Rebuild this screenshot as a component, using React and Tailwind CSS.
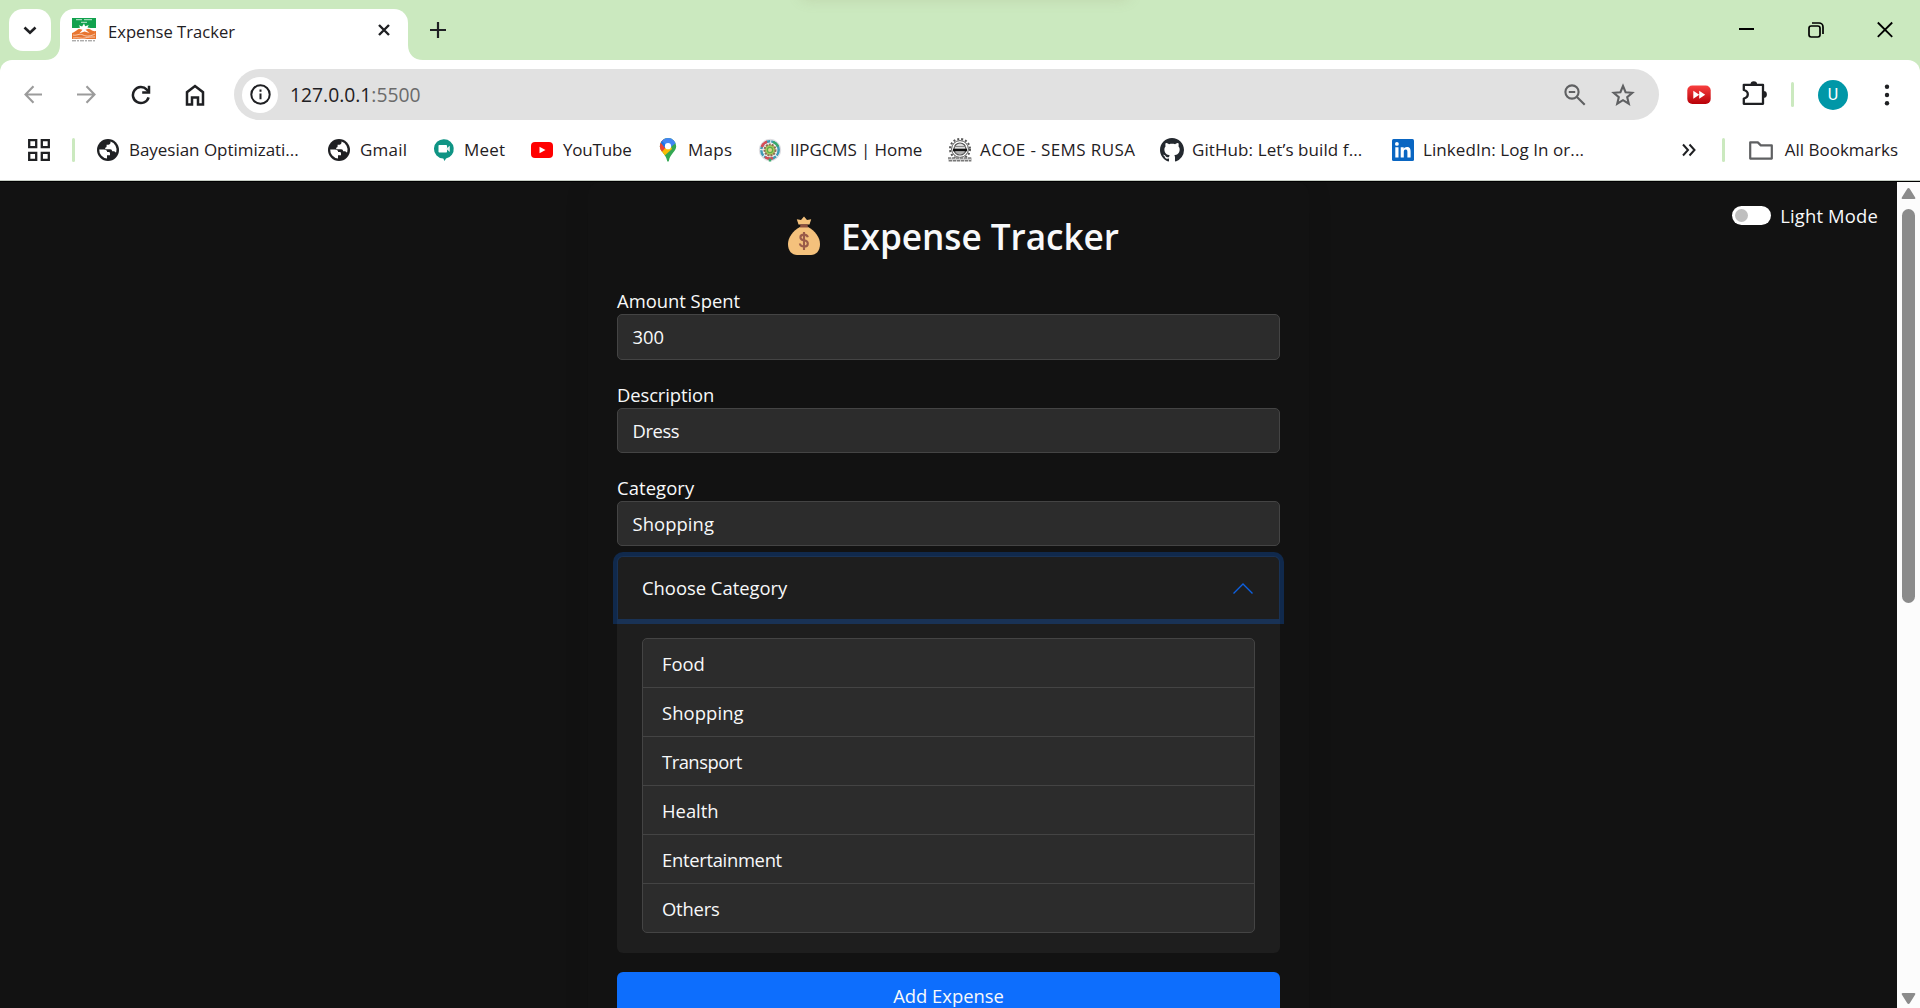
function TopStrip() {
  return (
    <div className="relative flex h-[60px] shrink-0 items-start overflow-hidden bg-[#cbe9bf]">
      <div className="absolute -top-4 left-[800px] h-4 w-[330px] rounded-full shadow-[0_0_14px_rgba(150,140,100,0.2)]" />
      <button className="mt-[9px] ml-[9px] flex h-[42px] w-[42px] items-center justify-center rounded-[14px] bg-white">
        <svg width="14" height="9" viewBox="0 0 14 9" fill="none" stroke="#1f2023" strokeWidth="2.6">
          <path d="M1.5 1.5 7 6.8l5.5-5.3" />
        </svg>
      </button>
      <svg className="mt-[45px] -ml-[6px] shrink-0" width="15" height="15" viewBox="0 0 15 15" fill="#fff">
        <path d="M15 0v15H0C9 15 15 9 15 0z" />
      </svg>
      <div className="mt-[9px] flex h-[51px] w-[348px] items-center rounded-t-[14px] bg-white pb-[9px] pl-3">
        <svg width="24" height="24" viewBox="0 0 24 24">
          <path fill="#12a24e" d="M0 0h24v10H0z" />
          <path fill="#e8752f" d="M0 15c4-1 5-5 12-5s8 4 12 3v8H0z" />
          <path fill="#fff" opacity=".6" d="M4 1h6v1.300H4zM12 1h8v1.300h-8zM9 3.800h6v1.300H9z" />
          <path fill="#fff" d="m12 5.500 1.200 2.800 3.500-1.300-1.200 2.600 3 .5-5 1.600 4 3.200-5-1.500-5 1.800 3-3.500-5.500-1.400 3.200-.7-1.400-2.400 3.300 1.200z" />
          <path stroke="#fff" strokeWidth=".6" fill="none" d="M1 17c4 1 6-2 10 0s8 1 12-1M1 20c5-1 9 1 12 0s6-1 10-1" />
          <path stroke="#8a8a8a" strokeWidth="1" strokeDasharray="4 1 2 1" d="M0 22.800h24" />
        </svg>
        <span className="mt-[3px] ml-3 w-[246px] text-[16.6px] leading-6 text-[#1f2023]">Expense Tracker</span>
        <svg className="mb-px ml-[24px] shrink-0" width="12" height="12" viewBox="0 0 12 12" stroke="#1f2023" strokeWidth="2.4">
          <path d="m1 1 10 10M11 1 1 11" />
        </svg>
      </div>
      <svg className="mt-[45px]" width="15" height="15" viewBox="0 0 15 15" fill="#fff">
        <path d="M0 0v15h15C6 15 0 9 0 0z" />
      </svg>
      <svg className="mt-[22px] ml-[7px]" width="16" height="16" viewBox="0 0 16 16" stroke="#1f2023" strokeWidth="2.2">
        <path d="M8 0v16M0 8h16" />
      </svg>
      <div className="mt-[21px] mr-[27px] ml-auto flex gap-[53px] text-black">
        <svg width="16" height="17" viewBox="0 0 16 17" stroke="currentColor" strokeWidth="2">
          <path d="M0 8h15" />
        </svg>
        <svg width="16" height="17" viewBox="0 0 16 17" fill="none" stroke="currentColor" strokeWidth="1.7">
          <rect x="1" y="5" width="11" height="11" rx="2.2" />
          <path d="M4 2h7a4 4 0 0 1 4 4v7" />
        </svg>
        <svg width="16" height="17" viewBox="0 0 16 17" stroke="currentColor" strokeWidth="1.8">
          <path d="m.8 1.5 14.4 14.4M15.2 1.5.8 15.9" />
        </svg>
      </div>
    </div>
  );
}

function Toolbar() {
  return (
    <div className="bg-[#cbe9bf]">
      <div className="flex h-[60px] items-start rounded-t-[12px] bg-white pt-[9px]">
        <div className="flex h-[51px] w-full items-center">
          <svg className="ml-6 shrink-0" width="19" height="19" viewBox="0 0 19 19" fill="none" stroke="#9b9b9b" strokeWidth="2.1">
            <path d="M18 9.5H2M9.5 1.2 1.5 9.5l8 8.3" />
          </svg>
          <svg className="ml-[34px] shrink-0" width="19" height="19" viewBox="0 0 19 19" fill="none" stroke="#9b9b9b" strokeWidth="2.1">
            <path d="M0 9.5h16.5M9.5 1.2l8 8.3-8 8.3" />
          </svg>
          <svg className="ml-[35px] shrink-0" width="20" height="20" viewBox="0 0 20 20" fill="none" stroke="#1f2023" strokeWidth="2.5">
            <path d="M17.6 12.3A8 8 0 1 1 15.8 4.6L18 6.8" />
            <path d="M18 .8v6.7h-6.8" />
          </svg>
          <svg className="ml-[34px] shrink-0" width="20" height="22" viewBox="0 0 20 22" fill="none" stroke="#1f2023" strokeWidth="2.5">
            <path d="M2 20.5V8.2L10 2l8 6.2v12.3h-5v-7H7v7z" />
          </svg>
          <div className="ml-[29px] flex h-[51px] w-[1425px] shrink-0 items-center rounded-full bg-[#e1e1e1] pl-[8px]">
            <div className="flex h-[36px] w-[36px] items-center justify-center rounded-full bg-white">
              <svg width="21" height="21" viewBox="0 0 21 21" fill="none" stroke="#1f2023" strokeWidth="2">
                <circle cx="10.5" cy="10.5" r="9.2" />
                <path d="M10.5 9.5v5.8M10.5 5.6v2.2" />
              </svg>
            </div>
            <span className="ml-[12px] text-[19.3px] leading-7 text-[#1f2023]">
              127.0.0.1<span className="text-[#6b6b6b]">:5500</span>
            </span>
            <svg className="ml-auto" width="22" height="22" viewBox="0 0 22 22" fill="none" stroke="#5f6062" strokeWidth="2.1">
              <circle cx="8" cy="8" r="6.6" />
              <path d="m12.7 12.7 8 8M4.8 8h6.4" />
            </svg>
            <svg className="mr-[24px] ml-[25px]" width="24" height="24" viewBox="0 0 24 24" fill="none" stroke="#5f6062" strokeWidth="2.100">
              <path d="m12 3 2.600 6.200 6.700.6-5.100 4.400 1.600 6.500-5.800-3.500-5.800 3.500 1.600-6.500-5.100-4.400 6.700-.6z" />
            </svg>
          </div>
          <svg className="ml-7 shrink-0" width="24" height="20" viewBox="0 0 24 20">
            <defs>
              <linearGradient id="ext" x1="0" y1="0" x2="0" y2="1">
                <stop offset="0" stopColor="#f8403f" />
                <stop offset="1" stopColor="#b80008" />
              </linearGradient>
            </defs>
            <rect x=".3" y=".5" width="23.4" height="18.5" rx="5" fill="url(#ext)" />
            <path fill="#fff" d="m6.3 5.8 6 4-6 4zM12.2 5.8l6 4-6 4z" />
          </svg>
          <svg className="mb-[3px] ml-[31px] shrink-0" width="26" height="26" viewBox="0 0 26 26">
            <path fill="none" stroke="#1f2023" strokeWidth="2.3" strokeLinejoin="round" d="M1.8 4.8h19.2v19H1.8v-5.2q4-1 4-4.3t-4-4.3z" />
            <path fill="#1f2023" d="M8.5 4.5a3.3 3.3 0 0 1 6.6 0zM21.5 11a3.3 3.3 0 0 1 0 6.8z" />
          </svg>
          <div className="ml-[23px] h-[25px] w-[3px] shrink-0 rounded-full bg-[#cbe9bf]" />
          <div className="ml-6 flex h-[30px] w-[30px] shrink-0 items-center justify-center rounded-full bg-[#0097a7] font-['Roboto',sans-serif] text-[16px] text-white">
            U
          </div>
          <svg className="ml-[36px] shrink-0" width="6" height="22" viewBox="0 0 6 22" fill="#1f2023">
            <circle cx="3" cy="2.7" r="2.2" />
            <circle cx="3" cy="11" r="2.2" />
            <circle cx="3" cy="19.3" r="2.2" />
          </svg>
        </div>
      </div>
    </div>
  );
}

function GlobeIcon() {
  return (
    <svg width="24" height="24" viewBox="0 0 24 24">
      <circle cx="12" cy="12" r="11" fill="#1f2023" />
      <path fill="#fff" d="M3.2 11.5H8q3 0 3.2 2.6h1.6q1.2 0 1.2 1.2v1.9h-3v3.4A8.8 8.8 0 0 1 3.2 11.500z" />
      <path fill="#fff" d="M14.500 3.600v1.200q0 1.700-1.900 1.900h-2v1.800q0 1-1.400 1.200v1.600h5q1.900.1 2 2h1.800q1 .1 1 1h1.200a8.700 8.700 0 0 0-5.700-10.700z" />
    </svg>
  );
}

function MeetIcon() {
  return (
    <svg width="24" height="24" viewBox="0 0 24 24">
      <path fill="#0f9484" d="M12 1.200a9.700 9.700 0 0 1 2 19.200L12.500 23l-1.200-2.400A9.700 9.700 0 0 1 12 1.200z" />
      <rect x="6.500" y="7" width="8.500" height="7.500" rx=".8" fill="#fff" />
      <path fill="#e6efee" d="m14 10.700 3.800-3v6.200z" />
    </svg>
  );
}

function YouTubeIcon() {
  return (
    <svg width="24" height="24" viewBox="0 0 24 24">
      <rect x="1" y="4" width="22" height="16" rx="4" fill="#f00" />
      <path fill="#fff" d="m9.500 8.800 6 3.200-6 3.200z" />
    </svg>
  );
}

function MapsIcon() {
  return (
    <svg width="24" height="24" viewBox="0 0 24 24">
      <clipPath id="pin">
        <path d="M12 0a8.200 8.200 0 0 1 8.200 8.200c0 5.200-6 7.300-7.300 14.600q-.9 2-1.800 0C9.800 15.500 3.800 13.400 3.800 8.200A8.200 8.200 0 0 1 12 0z" />
      </clipPath>
      <g clipPath="url(#pin)">
        <path fill="#34a853" d="M0 0h24v24H0z" />
        <path fill="#fbbc04" d="M0 14 12 2l4 9-9 8z" />
        <path fill="#ea4335" d="M0 0h7l5 7-8 9-4-4z" />
        <path fill="#4285f4" d="M5 2 12-1h8v6l-8 6z" />
        <path fill="#1a73e8" d="m5 2 7 7-3 1-4-5z" />
      </g>
      <circle cx="12" cy="8.200" r="3.100" fill="#fff" />
    </svg>
  );
}

function CmsIcon() {
  return (
    <svg width="24" height="24" viewBox="0 0 24 24" fill="none">
      <circle cx="12" cy="12" r="10.700" fill="#f3f1f3" stroke="#dddce0" />
      <circle cx="12" cy="12" r="8.700" stroke="#3f9bb5" strokeWidth="2.500" strokeDasharray="6 1" />
      <path d="M3.800 9A8.700 8.700 0 0 1 9 3.600M15 20a8.700 8.700 0 0 1-8-1" stroke="#d84a54" strokeWidth="2.500" />
      <path d="M15 3.800A8.700 8.700 0 0 1 20 8.500M12 20.500v3" stroke="#39a86b" strokeWidth="2.500" />
      <circle cx="12" cy="12" r="5.500" fill="#a5c95d" stroke="#8f6d54" strokeWidth="2" strokeDasharray="2 1" />
      <circle cx="12" cy="12" r="2.600" fill="#d9d58c" stroke="#5dac48" strokeWidth="1.200" />
    </svg>
  );
}

function GearIcon() {
  return (
    <svg width="24" height="24" viewBox="0 0 24 24" fill="none" stroke="#555">
      <circle cx="12" cy="11" r="10" strokeWidth="2" strokeDasharray="2 2" />
      <circle cx="12" cy="11" r="8.400" strokeWidth="1" />
      <circle cx="12" cy="11" r="6" fill="#ddd" strokeWidth="1.200" />
      <path d="M6 8.500h12M7 15h10" stroke="#888" />
      <path d="M5 12h14" stroke="#111" strokeWidth="2.600" />
      <path d="M0 19.500h24v4H0z" fill="#ccc" stroke="none" />
      <path d="M0 20h24M1 22.800h22" stroke="#555" strokeDasharray="3 1" />
    </svg>
  );
}

function GitHubIcon() {
  return (
    <svg width="24" height="24" viewBox="0 0 16 16" fill="#24292f">
      <path d="M8 0C3.580 0 0 3.580 0 8c0 3.540 2.290 6.530 5.470 7.590.4.070.55-.17.55-.38 0-.19-.01-.82-.01-1.490-2.010.37-2.530-.49-2.690-.94-.09-.23-.48-.94-.82-1.130-.28-.15-.68-.52-.01-.53.63-.01 1.080.58 1.230.82.72 1.210 1.870.87 2.330.66.07-.52.28-.87.51-1.070-1.780-.2-3.640-.89-3.640-3.950 0-.87.31-1.590.82-2.150-.08-.2-.36-1.020.08-2.120 0 0 .67-.21 2.200.82.64-.18 1.320-.27 2-.27s1.360.09 2 .27c1.530-1.040 2.200-.82 2.200-.82.44 1.100.16 1.920.08 2.120.51.56.82 1.270.82 2.150 0 3.070-1.870 3.750-3.650 3.950.29.25.54.73.54 1.480 0 1.070-.01 1.930-.01 2.200 0 .21.15.46.55.38A8.010 8.010 0 0 0 16 8c0-4.420-3.580-8-8-8z" />
    </svg>
  );
}

function LinkedInIcon() {
  return (
    <svg width="24" height="24" viewBox="0 0 24 24">
      <rect x="1" y="1" width="22" height="22" rx="1.500" fill="#0a66c2" />
      <path fill="#fff" d="M4.300 9.300h3.200v10.300H4.300zM9.700 9.300h3v1.400c.5-.9 1.600-1.700 3.200-1.700 3 0 3.700 2 3.700 4.700v5.900h-3.200v-5.200c0-1.300 0-2.800-1.700-2.800s-1.900 1.300-1.900 2.700v5.300H9.700z" />
      <circle cx="5.900" cy="5.900" r="1.900" fill="#fff" />
    </svg>
  );
}

const bookmarks = [
  { label: "Bayesian Optimizati...", Icon: GlobeIcon, box: "w-[231px]", text: "ml-[9px] tracking-[-0.03px]" },
  { label: "Gmail", Icon: GlobeIcon, box: "w-[105px]", text: "ml-[9px] tracking-[0.2px]" },
  { label: "Meet", Icon: MeetIcon, box: "w-[98px]", text: "ml-[8px] tracking-[0.2px]" },
  { label: "YouTube", Icon: YouTubeIcon, box: "w-[126px]", text: "ml-[9px] tracking-[-0.2px]" },
  { label: "Maps", Icon: MapsIcon, box: "w-[102px]", text: "ml-[8px] tracking-[0.3px]" },
  { label: "IIPGCMS | Home", Icon: CmsIcon, box: "w-[190px]", text: "ml-[8px] tracking-[-0.1px]" },
  { label: "ACOE - SEMS RUSA", Icon: GearIcon, box: "w-[212px]", text: "ml-[8px] tracking-[0.38px]" },
  { label: "GitHub: Let’s build f...", Icon: GitHubIcon, box: "w-[231px]", text: "ml-[8px] tracking-[0.09px]" },
  { label: "LinkedIn: Log In or...", Icon: LinkedInIcon, box: "w-[200px]", text: "ml-[8px] tracking-[0.07px]" },
];

function BookmarksBar() {
  return (
    <div className="flex h-[61px] shrink-0 items-center border-b border-[#c6cdc4] bg-white text-[17px] leading-6 text-[#1f2023]">
      <svg className="ml-7 shrink-0" width="22" height="22" viewBox="0 0 22 22" fill="none" stroke="#1f2023" strokeWidth="2.3">
        <path d="M1.200 1.200h7v7h-7zM13.800 1.200h7v7h-7zM1.200 13.800h7v7h-7zM13.800 13.800h7v7h-7z" />
      </svg>
      <div className="mr-[21px] ml-[22px] h-[24px] w-[3px] shrink-0 rounded-full bg-[#cbe9bf]" />
      {bookmarks.map(({ label, Icon, box, text }) => (
        <div key={label} className={`flex shrink-0 items-center whitespace-nowrap ${box}`}>
          <Icon />
          <span className={text}>{label}</span>
        </div>
      ))}
      <svg className="ml-auto shrink-0" width="14" height="14" viewBox="0 0 14 14" fill="none" stroke="#1f2023" strokeWidth="2">
        <path d="m1 1.500 5 5.500-5 5.500M7.500 1.500l5 5.500-5 5.500" />
      </svg>
      <div className="ml-[26px] h-[24px] w-[3px] shrink-0 rounded-full bg-[#cbe9bf]" />
      <svg className="ml-6 shrink-0" width="24" height="19" viewBox="0 0 24 19" fill="none" stroke="#5f6062" strokeWidth="2.200" strokeLinejoin="round">
        <path d="M1.200 1.400h7.600l3 3h11v13.200H1.200z" />
      </svg>
      <span className="mr-[22px] ml-3 whitespace-nowrap">All Bookmarks</span>
    </div>
  );
}

function MoneyBag() {
  return (
    <svg width="34" height="40" viewBox="0 0 34 40">
      <path fill="#f4c17c" d="M11.500 8.500 9.800 3.200l4.200.8 3-3.500 3 3.500 4.200-.8-1.700 5.300z" />
      <path fill="#f4c17c" d="M13 11h8c7 3.500 12 10.500 12 17 0 7-4 11-9 11H10c-5 0-9-4-9-11 0-6.500 5-13.500 12-17z" />
      <path fill="#8d5142" d="M13.500 8.300h7l.5 3.300h-8z" />
      <path fill="none" stroke="#9a5b49" strokeWidth="2.100" d="M20.800 21.300c-.3-1.600-1.700-2.700-3.800-2.700-4.800 0-4.800 5 0 5.700 5.200.7 5 6.200 0 6.200-2.400 0-3.900-1.200-4.100-3M17 16v18" />
    </svg>
  );
}

function Field({ label, value, labelClass = "", valueClass = "", height }) {
  return (
    <div className="mb-6">
      <div className={`h-6 leading-[22px] ${labelClass}`}>{label}</div>
      <div className={`flex items-center rounded-[5px] border border-[#444] bg-[#2c2c2c] pl-[14.500px] ${height}`}>
        <span className={valueClass}>{value}</span>
      </div>
    </div>
  );
}

const categories = [
  { name: "Food", text: "" },
  { name: "Shopping", text: "tracking-[0.1px]" },
  { name: "Transport", text: "tracking-[-0.5px]" },
  { name: "Health", text: "" },
  { name: "Entertainment", text: "tracking-[-0.3px]" },
  { name: "Others", text: "tracking-[-0.2px]" },
];

function ExpenseForm() {
  return (
    <div className="ml-[588px] h-[1000px] w-[721px] shrink-0 rounded-[12px] bg-[#121212] px-[29px] shadow-[0_0_24px_rgba(0,0,0,0.12)]">
      <h1 className="flex h-[108px] items-center pl-[170px]">
        <MoneyBag />
        <span className="ml-[19px] text-[35.200px] font-semibold whitespace-nowrap tracking-[-0.05px] pl-px">Expense Tracker</span>
      </h1>
      <Field label="Amount Spent" value="300" height="h-[46px]" />
      <Field label="Description" value="Dress" height="h-[45px]" labelClass="tracking-[-0.1px]" valueClass="tracking-[-0.4px]" />
      <Field label="Category" value="Shopping" height="h-[45px]" labelClass="tracking-[0.1px]" valueClass="tracking-[0.08px]" />
      <div className="-mt-[14px] h-[397px] rounded-[6px] bg-[#1e1e1e] px-px pt-px">
        <div className="flex h-[62px] items-center justify-between rounded-t-[5px] pr-[26px] pl-6 shadow-[0_0_0_5px_rgba(13,110,253,0.25)]">
          <span>Choose Category</span>
          <svg width="20" height="11" viewBox="0 0 20 11" fill="none" stroke="#0d60e0" strokeWidth="1.400">
            <path d="M.5 10.500 10 1l9.500 9.500" />
          </svg>
        </div>
        <div className="mx-6 mt-[19px] rounded-[5px] border border-[#444] bg-[#2c2c2c]">
          {categories.map(({ name, text }) => (
            <div key={name} className="flex h-[49px] items-center border-b border-[#444] pt-px pl-[19px] last:h-[48px] last:border-b-0">
              <span className={text}>{name}</span>
            </div>
          ))}
        </div>
      </div>
      <button className="mt-[19px] flex h-[47px] w-full items-center justify-center rounded-[6px] bg-[#0d6efd]">
        Add Expense
      </button>
    </div>
  );
}

function Scrollbar() {
  return (
    <div className="flex w-[23px] shrink-0 flex-col items-center bg-[#fcfcfc]">
      <svg className="mt-[6px]" width="15" height="12" viewBox="0 0 15 12" fill="#8b8b8b">
        <path d="M7.500 0q.8 0 1.400 1l5.300 8.500q.7 1.500-.9 1.500H1.700Q.1 11 .8 9.500L6.100 1q.6-1 1.400-1z" />
      </svg>
      <div className="mt-[9px] h-[394px] w-[13px] rounded-full bg-[#8b8b8b]" />
      <svg className="mt-auto mb-[4px]" width="15" height="12" viewBox="0 0 15 12" fill="#8b8b8b">
        <path d="M7.500 12q.8 0 1.400-1l5.300-8.500Q14.900 1 13.300 1H1.700Q.1 1 .8 2.500L6.100 11q.6 1 1.400 1z" />
      </svg>
    </div>
  );
}

export default function App() {
  return (
    <div className="flex h-[1008px] w-[1920px] flex-col overflow-hidden bg-white font-['Open_Sans','Noto_Sans',sans-serif]">
      <TopStrip />
      <Toolbar />
      <BookmarksBar />
      <main className="flex min-h-0 flex-1 overflow-hidden border-t border-black bg-[#121212] text-[18.400px] text-[#f8f9fa]">
        <ExpenseForm />
        <div className="ml-auto flex items-start pt-[24px] pr-[19px]">
          <div className="mr-[9px] flex h-[19px] w-[39px] items-center rounded-full bg-white pl-[3px]">
            <div className="h-[13px] w-[13px] rounded-full bg-[#bfbfbf]" />
          </div>
          <span className="-mt-px leading-[22px] tracking-[0.18px]">Light Mode</span>
        </div>
        <Scrollbar />
      </main>
    </div>
  );
}
